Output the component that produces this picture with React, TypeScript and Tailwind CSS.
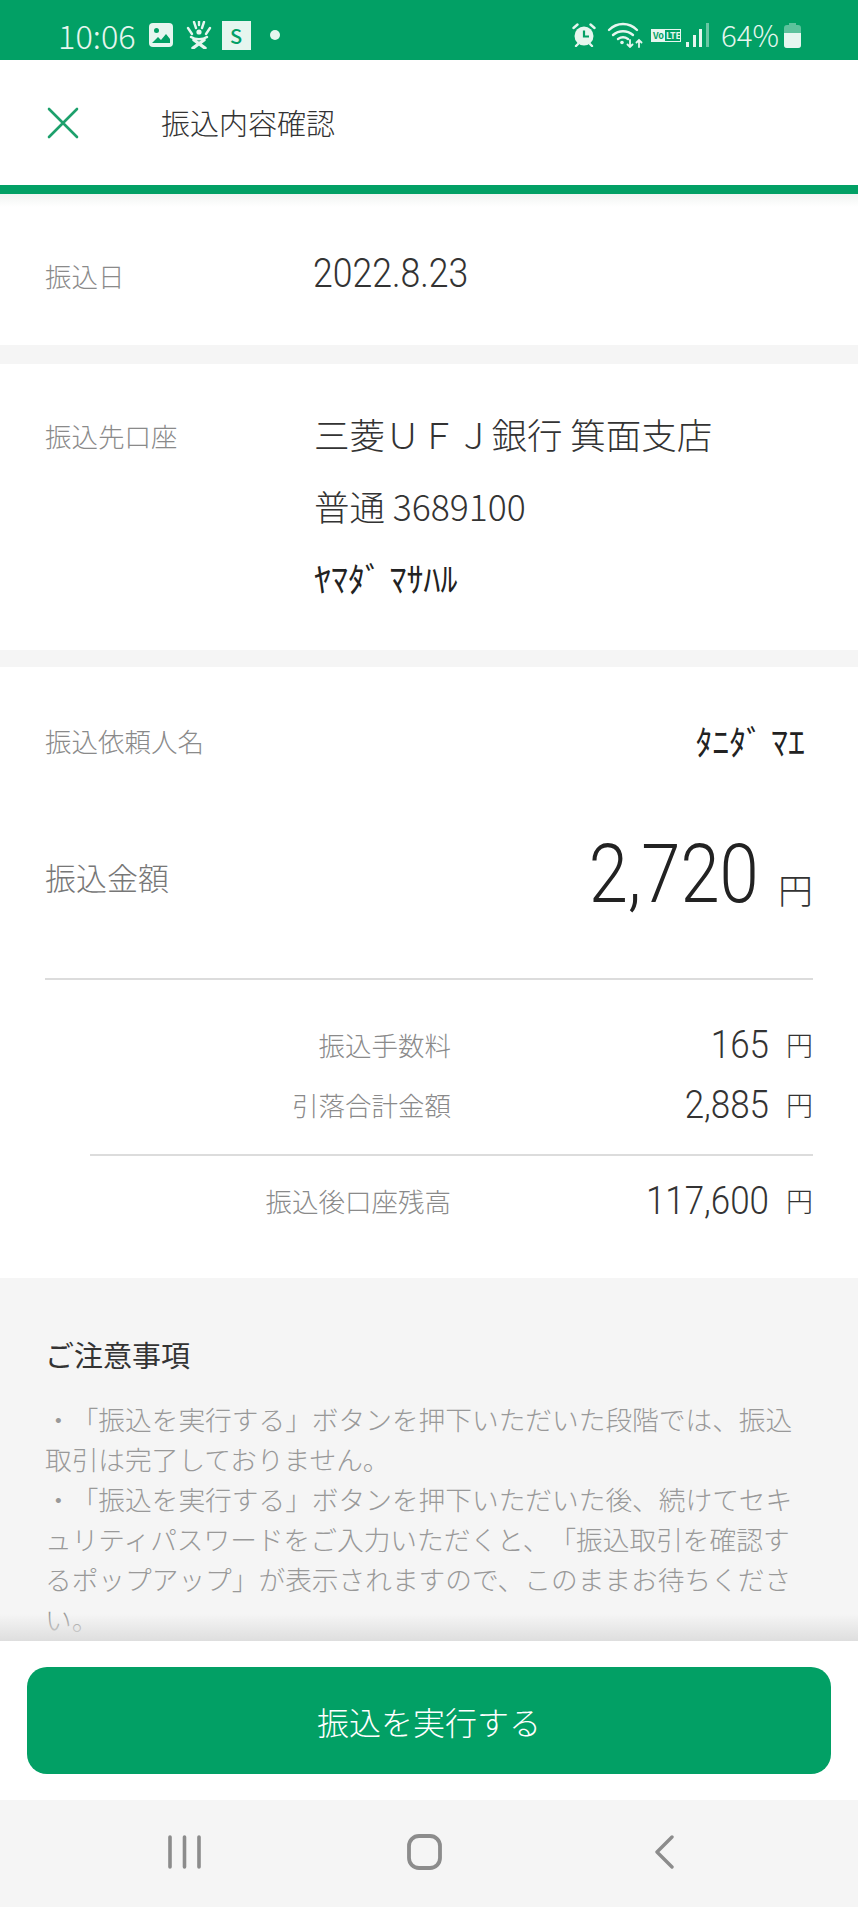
const FONT = "font-['Noto_Sans_CJK_JP','Noto_Sans',sans-serif]";

function StatusBar() {
  return (
    <div className="h-[60px] bg-[#02a065] flex items-center justify-between pt-[10px] pl-[58px] pr-[57px] text-[#e6f6ef]">
      <div className="flex items-center">
        <span className="text-[32.500px] font-light leading-none">10:06</span>
        <svg width="24" height="24" viewBox="0 0 24 24" className="ml-[13px]">
          <rect x="0" y="0" width="24" height="24" rx="4" fill="#e6f6ef" />
          <circle cx="7.500" cy="7.500" r="2.500" fill="#02a065" />
          <path d="M3 20l6-6 3 3 5-6 4 5v4z" fill="#02a065" />
        </svg>
        <svg width="26" height="28" viewBox="0 0 26 28" className="ml-[13px]" stroke="#e6f6ef" fill="none" strokeWidth="2.400" strokeLinecap="round">
          <path d="M8 19l11 8M18 19L7 27" strokeWidth="3.400" />
          <circle cx="13" cy="11" r="2.600" fill="#e6f6ef" stroke="none" />
          <path d="M2 7l4 6M24 7l-4 6M8 1l2 6M18 1l-2 6M13 0v4M5 16c4 3 12 3 16 0" />
        </svg>
        <span className="ml-[10px] w-[29px] h-[29px] bg-[#e6f6ef] text-[#02a065] text-[20px] leading-[29px] text-center font-medium">S</span>
        <span className="ml-[19px] w-[10px] h-[10px] rounded-full bg-[#e6f6ef]" />
      </div>
      <div className="flex items-center">
        <svg width="24" height="24" viewBox="0 0 24 24" className="mr-[11px]">
          <circle cx="12" cy="13" r="9.500" fill="#e6f6ef" />
          <path d="M12 7.500v6h5" stroke="#02a065" strokeWidth="2.200" fill="none" />
          <path d="M1.500 5l4-3.500M22.500 5l-4-3.500M4 23l2-2M20 23l-2-2" stroke="#e6f6ef" strokeWidth="2.400" strokeLinecap="round" />
        </svg>
        <svg width="36" height="26" viewBox="0 0 36 26" className="mr-[8px]" stroke="#e6f6ef" fill="none" strokeWidth="2.400" strokeLinecap="round">
          <path d="M2 8c8-8 20-8 28 0M6 13c6-5 14-5 20 0M11 17c3-2 7-2 10 0" />
          <path d="M23 18v7M20.500 22.500l2.500 2.500 2.500-2.500M32 25v-7M29.500 20.500l2.500-2.500 2.500 2.500" strokeWidth="1.800" />
          <circle cx="15" cy="20.500" r="1.800" fill="#e6f6ef" stroke="none" />
        </svg>
        <span className="mr-[5px] flex items-center h-[13px] w-[30px] border border-[#e6f6ef] text-[9px] leading-none font-bold">
          <span className="bg-[#e6f6ef] text-[#02a065] h-full flex items-center px-[1px]">Vo</span>
          <span className="pl-[1px]">LTE</span>
        </span>
        <svg width="23" height="24" viewBox="0 0 23 24" className="mr-[12px]">
          <rect x="0" y="19" width="3" height="5" fill="#e6f6ef" />
          <rect x="7" y="12" width="3" height="12" fill="#e6f6ef" />
          <rect x="13" y="6" width="3" height="18" fill="#e6f6ef" />
          <rect x="20" y="0" width="3" height="24" fill="#e6f6ef" opacity="0.45" />
        </svg>
        <span className="text-[29.500px] font-light leading-none">64%</span>
        <svg width="17" height="25" viewBox="0 0 17 25" className="ml-[5px]">
          <path d="M5 0h7v2h2a3 3 0 013 3v17a3 3 0 01-3 3H3a3 3 0 01-3-3V5a3 3 0 013-3h2z" fill="#e6f6ef" opacity="0.4" />
          <path d="M0 10h17v12a3 3 0 01-3 3H3a3 3 0 01-3-3z" fill="#e6f6ef" />
        </svg>
      </div>
    </div>
  );
}

function FeeRow({ label, value, className }: { label: string; value: string; className?: string }) {
  return (
    <div className={`flex items-baseline ${className ?? ''}`}>
      <span className="w-[406px] text-right text-[26.500px] text-[#8a8a8a] font-light leading-[35px]">{label}</span>
      <span className="flex-1 text-right text-[38px] font-light leading-[35px] text-[#333] font-['Roboto',sans-serif] scale-x-[0.92] origin-right translate-y-[2px]">{value}</span>
      <span className="w-[44px] text-right text-[27px] font-light leading-[35px] text-[#333]">円</span>
    </div>
  );
}

export default function App() {
  return (
    <div className={`${FONT} relative w-[858px] h-[1907px] overflow-hidden bg-[#f5f5f5] flex flex-col`}>
      <StatusBar />

      <div className="h-[125px] bg-white flex items-center pl-[47px]">
        <svg width="32" height="32" viewBox="0 0 32 32" stroke="#1da06c" strokeWidth="2.600" strokeLinecap="round">
          <path d="M2 2l28 28M30 2L2 30" />
        </svg>
        <h1 className="ml-[82px] text-[29px] font-light text-[#333] leading-none">振込内容確認</h1>
      </div>
      <div className="h-[9px] bg-[#02a065]" />

      <section className="relative h-[151px] bg-white flex pl-[45px] pt-[62px]">
        <div className="absolute inset-x-0 top-0 h-[13px] bg-gradient-to-b from-[#f1f4f2] to-white" />
        <span className="w-[268px] text-[26.500px] text-[#8a8a8a] font-light leading-[36px] pt-[2px]">振込日</span>
        <span className="text-[40px] font-light text-[#333] leading-[36px] font-['Roboto',sans-serif] scale-x-[0.89] origin-left">2022.8.23</span>
      </section>

      <section className="mt-[19px] h-[286px] bg-white flex pl-[45px] pt-[50px]">
        <span className="w-[269px] text-[26.500px] text-[#8a8a8a] font-light leading-[36px] pt-[4px]">振込先口座</span>
        <div className="text-[#333] font-light">
          <p className="text-[35.500px] leading-[40px] whitespace-pre">三菱ＵＦＪ銀行 箕面支店</p>
          <p className="mt-[32px] text-[35.500px] leading-[40px]">普通 3689100</p>
          <p className="mt-[32px] text-[34px] leading-[40px] font-normal text-[#222]">ﾔﾏﾀﾞ ﾏｻﾊﾙ</p>
        </div>
      </section>

      <section className="mt-[17px] h-[611px] bg-white px-[45px]">
        <div className="flex items-center justify-between pt-[54px]">
          <span className="text-[26.500px] text-[#8a8a8a] font-light leading-[36px]">振込依頼人名</span>
          <span className="text-[34px] leading-[40px] text-[#222] pr-[8px]">ﾀﾆﾀﾞ ﾏｴ</span>
        </div>
        <div className="mt-[61px] h-[108px] flex items-center justify-between">
          <span className="text-[31px] text-[#777] font-light translate-y-[1px]">振込金額</span>
          <div className="flex items-baseline">
            <span className="text-[82px] font-light leading-none text-[#222] font-['Roboto',sans-serif] scale-x-[0.86] origin-right -translate-y-[2px]">2,720</span>
            <span className="ml-[19px] text-[35px] font-light text-[#333] leading-none">円</span>
          </div>
        </div>
        <div className="mt-[48px] h-[2px] bg-[#dcdcdc]" />
        <FeeRow className="mt-[46px]" label="振込手数料" value="165" />
        <FeeRow className="mt-[24px]" label="引落合計金額" value="2,885" />
        <div className="mt-[32px] ml-[45px] h-[2px] bg-[#dcdcdc]" />
        <FeeRow className="mt-[26px]" label="振込後口座残高" value="117,600" />
      </section>

      <section className="relative h-[363px] pl-[45px] pr-[55px] pt-[58px] overflow-hidden">
        <h2 className="text-[29px] text-[#333] leading-[36px]">ご注意事項</h2>
        <p className="mt-[27px] text-[26.700px] font-light text-[#999] leading-[40px] [text-spacing-trim:space-all] [line-break:loose]">
          ・「振込を実行する」ボタンを押下いただいた段階では、振込取引は完了しておりません。
          <br />
          ・「振込を実行する」ボタンを押下いただいた後、続けてセキュリティパスワードをご入力いただくと、「振込取引を確認するポップアップ」が表示されますので、このままお待ちください。
        </p>
        <div className="absolute inset-x-0 bottom-0 h-[27px] bg-gradient-to-b from-transparent to-[#dedede]" />
      </section>

      <div className="h-[159px] bg-white px-[27px] pt-[26px]">
        <button className="w-full h-[107px] rounded-[20px] bg-[#02a065] text-white text-[32px] font-light">振込を実行する</button>
      </div>

      <nav className="h-[107px] bg-[#f5f5f5] flex items-center justify-center pr-[10px] pb-[4px]">
        <div className="w-[240px] flex justify-center">
          <svg width="33" height="34" viewBox="0 0 33 34" stroke="#8c8c8c" strokeWidth="3.600" strokeLinecap="round">
            <path d="M2 2v30M16.500 2v30M31 2v30" />
          </svg>
        </div>
        <div className="w-[240px] flex justify-center">
          <svg width="35" height="36" viewBox="0 0 35 36" stroke="#8c8c8c" strokeWidth="3.800" fill="none">
            <rect x="2" y="2" width="31" height="32" rx="10" />
          </svg>
        </div>
        <div className="w-[240px] flex justify-center">
          <svg width="21" height="34" viewBox="0 0 21 34" stroke="#8c8c8c" strokeWidth="3.400" fill="none" strokeLinecap="round" strokeLinejoin="round">
            <path d="M18 2L3 17l15 15" />
          </svg>
        </div>
      </nav>
    </div>
  );
}
